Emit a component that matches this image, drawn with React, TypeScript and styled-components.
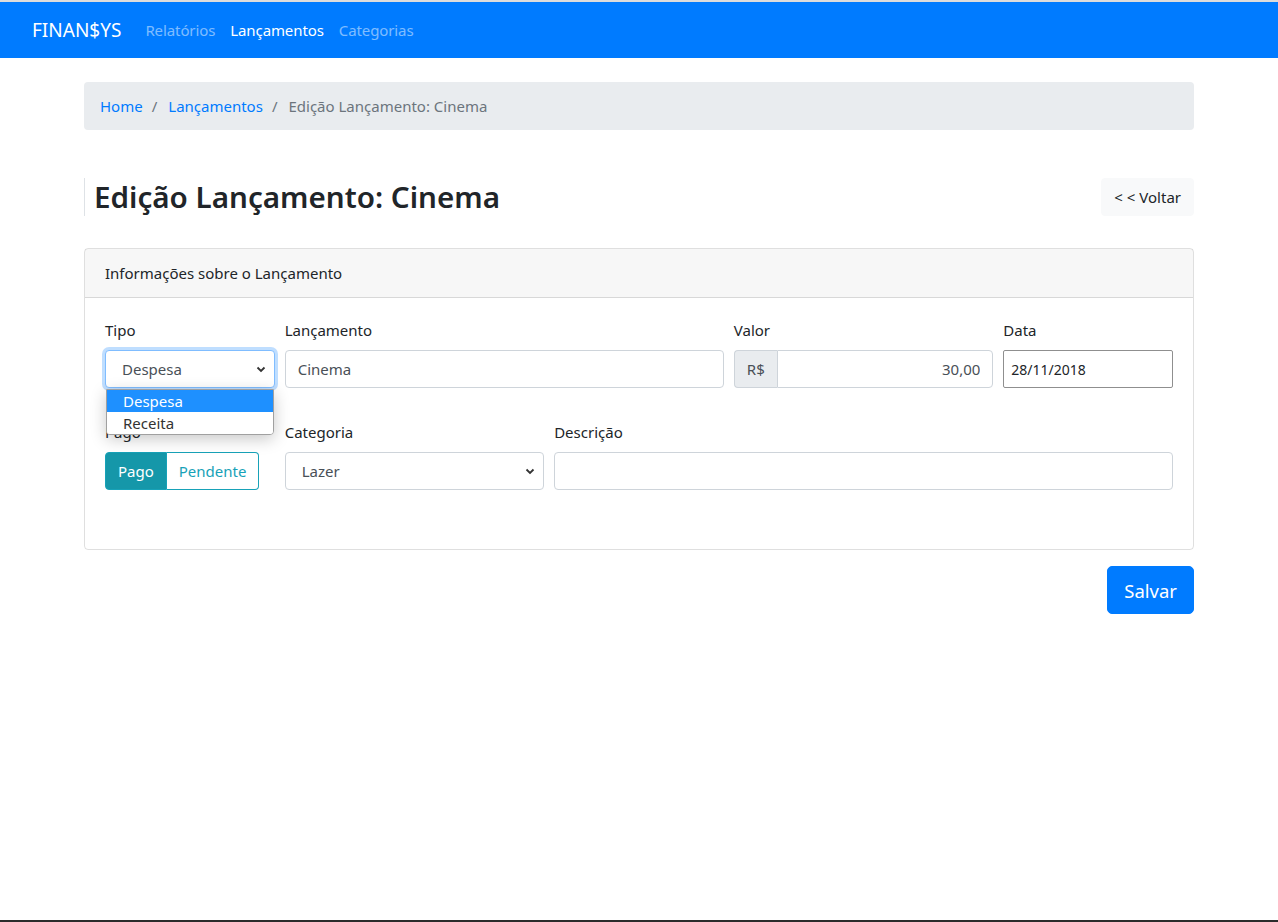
import { createGlobalStyle, styled } from 'styled-components'

const GlobalStyle = createGlobalStyle`
  html, body {
    margin: 0;
    padding: 0;
  }
  body {
    font-family: "Noto Sans", "Liberation Sans", sans-serif;
    font-size: 15px;
    line-height: 24px;
    color: #212529;
    background: #fff;
  }
  *, *::before, *::after {
    box-sizing: border-box;
  }
`

const Page = styled.div`
  min-height: 100vh;
  border-top: 2px solid #dcdcdc;
  border-bottom: 2px solid #2b2b2b;
`

const Navbar = styled.nav`
  display: flex;
  align-items: center;
  height: 56px;
  padding: 0 32px;
  background: #007bff;
`

const Brand = styled.a`
  color: #fff;
  font-size: 19px;
  margin-right: 24px;
  text-decoration: none;
`

const NavLinks = styled.div`
  display: flex;
  gap: 15px;
`

const NavLink = styled.a<{ $active?: boolean }>`
  color: ${(p) => (p.$active ? '#fff' : 'rgba(255,255,255,.5)')};
  font-size: 15px;
  letter-spacing: -0.1px;
  text-decoration: none;
`

const Container = styled.main`
  width: 1110px;
  margin: 0 auto;
  padding-top: 24px;
`

const Breadcrumb = styled.ol`
  display: flex;
  list-style: none;
  margin: 0 0 48px;
  padding: 12px 16px;
  background: #e9ecef;
  border-radius: 4px;
`

const Crumb = styled.li<{ $active?: boolean }>`
  color: ${(p) => (p.$active ? '#6c757d' : '#007bff')};
  &:not(:first-child)::before {
    content: '/';
    color: #6c757d;
    padding: 0 11px 0 9px;
  }
`

const HeaderRow = styled.div`
  display: flex;
  justify-content: space-between;
  align-items: center;
  margin-bottom: 32px;
`

const Title = styled.h2`
  margin: 0;
  padding-left: 9px;
  border-left: 1px solid #dee2e6;
  font-size: 29.6px;
  font-weight: 600;
  line-height: 38px;
`

const LightButton = styled.button`
  font-family: inherit;
  font-size: 15px;
  color: #212529;
  background: #f8f9fa;
  border: 1px solid #f8f9fa;
  border-radius: 4px;
  height: 38px;
  padding: 0 12px;
`

const Card = styled.section`
  border: 1px solid rgba(0, 0, 0, .125);
  border-radius: 4px;
`

const CardHeader = styled.div`
  padding: 12px 20px;
  background: rgba(0, 0, 0, .03);
  border-bottom: 1px solid rgba(0, 0, 0, .125);
`

const CardBody = styled.div`
  padding: 20px 20px 27px;
`

const FormRow = styled.div`
  display: flex;
  margin: 0 -5px 32px;
`

const Col = styled.div<{ $span: number }>`
  position: relative;
  flex: 0 0 ${(p) => (p.$span / 12) * 100}%;
  max-width: ${(p) => (p.$span / 12) * 100}%;
  padding: 0 5px;
  display: flex;
  flex-direction: column;
  align-items: flex-start;
`

const Label = styled.label`
  line-height: 24px;
  margin-bottom: 8px;
`

const Input = styled.input<{ $right?: boolean }>`
  width: 100%;
  height: 38px;
  padding: 6px 12px;
  font-family: inherit;
  font-size: 15px;
  color: #495057;
  text-align: ${(p) => (p.$right ? 'right' : 'left')};
  border: 1px solid #ced4da;
  border-radius: 4px;
  background: #fff;
  outline: none;
`

const Select = styled.div<{ $focus?: boolean }>`
  display: flex;
  align-items: center;
  justify-content: space-between;
  width: 100%;
  height: 38px;
  padding: 0 8px 0 16px;
  color: #495057;
  border: 1px solid ${(p) => (p.$focus ? '#80bdff' : '#ced4da')};
  border-radius: 4px;
  background: #fff;
  box-shadow: ${(p) => (p.$focus ? '0 0 0 3px rgba(0,123,255,.25)' : 'none')};
`

const InputGroup = styled.div`
  display: flex;
  width: 100%;
`

const Prepend = styled.span`
  display: flex;
  align-items: center;
  padding: 0 12px;
  height: 38px;
  color: #495057;
  background: #e9ecef;
  border: 1px solid #ced4da;
  border-right: none;
  border-radius: 4px 0 0 4px;
  & + input {
    border-radius: 0 4px 4px 0;
  }
`

const DateInput = styled.input`
  width: 100%;
  height: 38px;
  padding: 0 7px;
  font-family: inherit;
  font-size: 14px;
  color: #212529;
  border: 1px solid #8f8f8f;
  border-radius: 2px;
  outline: none;
`

const ButtonGroup = styled.div`
  display: flex;
  height: 38px;
`

const ToggleButton = styled.button<{ $active?: boolean }>`
  font-family: inherit;
  font-size: 15px;
  padding: 0 12px;
  color: ${(p) => (p.$active ? '#fff' : '#17a2b8')};
  background: ${(p) => (p.$active ? '#1597a9' : '#fff')};
  border: 1px solid #17a2b8;
  &:first-child {
    border-radius: 4px 0 0 4px;
  }
  &:last-child {
    border-left: none;
    border-radius: 0 4px 4px 0;
  }
`

const Dropdown = styled.ul`
  position: absolute;
  top: 71px;
  left: 6px;
  width: 168px;
  margin: 0;
  padding: 0;
  list-style: none;
  background: #fff;
  border: 1px solid #a0a0a0;
  border-radius: 0 0 4px 4px;
  box-shadow: 0 4px 16px rgba(0, 0, 0, .22);
  z-index: 2;
  overflow: hidden;
`

const Option = styled.li<{ $selected?: boolean }>`
  height: 22px;
  line-height: 22px;
  padding-left: 16px;
  color: ${(p) => (p.$selected ? '#fff' : '#333')};
  background: ${(p) => (p.$selected ? '#1e90ff' : '#fff')};
`

const Footer = styled.div`
  display: flex;
  justify-content: flex-end;
  margin-top: 16px;
`

const PrimaryButton = styled.button`
  font-family: inherit;
  font-size: 18.5px;
  color: #fff;
  background: #007bff;
  border: 1px solid #007bff;
  border-radius: 5px;
  height: 48px;
  padding: 0 16px;
`

const Chevron = () => (
  <svg width="10" height="10" viewBox="0 0 10 10">
    <path d="M1.5 3.5 L5 7 L8.5 3.5" fill="none" stroke="#333" strokeWidth="1.8" />
  </svg>
)

export default function App() {
  return (
    <Page>
      <GlobalStyle />
      <Navbar>
        <Brand href="#">FINAN$YS</Brand>
        <NavLinks>
          <NavLink href="#">Relatórios</NavLink>
          <NavLink href="#" $active>
            Lançamentos
          </NavLink>
          <NavLink href="#">Categorias</NavLink>
        </NavLinks>
      </Navbar>

      <Container>
        <Breadcrumb>
          <Crumb>Home</Crumb>
          <Crumb>Lançamentos</Crumb>
          <Crumb $active>Edição Lançamento: Cinema</Crumb>
        </Breadcrumb>

        <HeaderRow>
          <Title>Edição Lançamento: Cinema</Title>
          <LightButton>&lt; &lt; Voltar</LightButton>
        </HeaderRow>

        <Card>
          <CardHeader>Informações sobre o Lançamento</CardHeader>
          <CardBody>
            <FormRow>
              <Col $span={2}>
                <Label>Tipo</Label>
                <Select $focus>
                  Despesa <Chevron />
                </Select>
                <Dropdown>
                  <Option $selected>Despesa</Option>
                  <Option>Receita</Option>
                </Dropdown>
              </Col>
              <Col $span={5}>
                <Label>Lançamento</Label>
                <Input defaultValue="Cinema" />
              </Col>
              <Col $span={3}>
                <Label>Valor</Label>
                <InputGroup>
                  <Prepend>R$</Prepend>
                  <Input $right defaultValue="30,00" />
                </InputGroup>
              </Col>
              <Col $span={2}>
                <Label>Data</Label>
                <DateInput defaultValue="28/11/2018" />
              </Col>
            </FormRow>

            <FormRow>
              <Col $span={2}>
                <Label>Pago</Label>
                <ButtonGroup>
                  <ToggleButton $active>Pago</ToggleButton>
                  <ToggleButton>Pendente</ToggleButton>
                </ButtonGroup>
              </Col>
              <Col $span={3}>
                <Label>Categoria</Label>
                <Select>
                  Lazer <Chevron />
                </Select>
              </Col>
              <Col $span={7}>
                <Label>Descrição</Label>
                <Input />
              </Col>
            </FormRow>
          </CardBody>
        </Card>

        <Footer>
          <PrimaryButton>Salvar</PrimaryButton>
        </Footer>
      </Container>
    </Page>
  )
}
